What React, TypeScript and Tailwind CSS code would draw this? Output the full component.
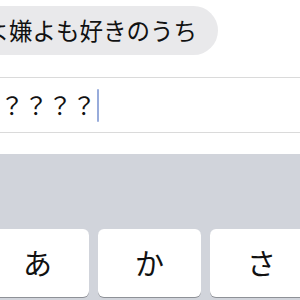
import React from 'react';

const font = { fontFamily: '"Noto Sans CJK JP", "Noto Sans", sans-serif' };

const keys = ['あ', 'か', 'さ'];

export default function App() {
  return (
    <div
      className="flex h-[300px] w-[300px] flex-col overflow-hidden bg-white text-[#111]"
      style={font}
    >
      {/* Message bubble */}
      <div className="h-[77px] pt-[6px]">
        <div className="ml-[-52px] inline-flex h-[49px] items-center whitespace-nowrap rounded-r-[25px] bg-[#e9e9eb] pl-[14px] pr-[21px] text-[23.5px] leading-none">
          嫌よ嫌よも好きのうち
        </div>
      </div>

      {/* Text input */}
      <div className="flex h-[56px] items-center border-y border-[#dadada]">
        <span className="text-[24px] leading-none">？？？？</span>
        <span className="ml-[1px] h-[33px] w-[2px] rounded-full bg-[#98acdb]" />
      </div>

      <div className="h-[21px]" />

      {/* Keyboard */}
      <div className="flex flex-1 flex-col bg-[#d1d4db] pt-[75px]">
        <div className="ml-[-14px] flex gap-[9px]">
          {keys.map((k) => (
            <div
              key={k}
              className="flex h-[68px] w-[103px] shrink-0 items-center justify-center rounded-[6px] bg-white text-[29px] shadow-[0_1px_0_#8e9197]"
            >
              {k}
            </div>
          ))}
        </div>
      </div>
    </div>
  );
}
